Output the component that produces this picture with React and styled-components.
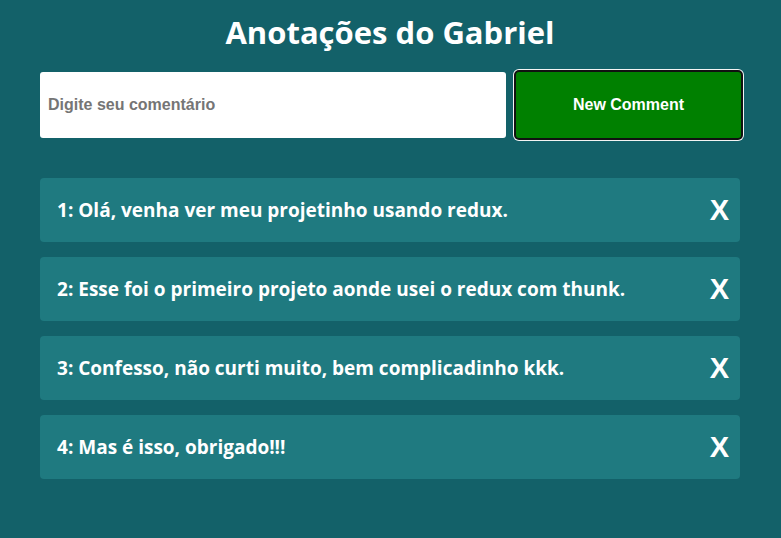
import styled, { createGlobalStyle } from 'styled-components';

const GlobalStyle = createGlobalStyle`
  html, body {
    margin: 0;
    padding: 0;
    background: #136169;
    min-height: 100%;
  }
  body {
    font-family: 'Open Sans', 'DejaVu Sans', sans-serif;
  }
`;

const COMMENTS = [
  'Olá, venha ver meu projetinho usando redux.',
  'Esse foi o primeiro projeto aonde usei o redux com thunk.',
  'Confesso, não curti muito, bem complicadinho kkk.',
  'Mas é isso, obrigado!!!',
];

const Page = styled.main`
  width: 781px;
  padding: 10px 41px 40px 40px;
  min-height: 538px;
  box-sizing: border-box;
`;

const Title = styled.h1`
  margin: 0;
  text-align: center;
  color: #fff;
  font-size: 31px;
  font-weight: 700;
  line-height: 44px;
`;

const Form = styled.form`
  display: flex;
  gap: 8px;
  margin-top: 16px;
  width: 703px;
  align-items: center;
`;

const Input = styled.input`
  width: 466px;
  height: 66px;
  box-sizing: border-box;
  border: none;
  border-radius: 3px;
  padding: 0 8px;
  font-family: 'Liberation Sans', Arial, sans-serif;
  font-weight: 700;
  font-size: 16px;
  color: #333;
  outline: none;

  &::placeholder {
    color: #757575;
  }
`;

const Button = styled.button`
  width: 229px;
  height: 70px;
  box-sizing: border-box;
  background: #008000;
  color: #fff;
  border: 2px solid #111;
  box-shadow: 0 0 0 1px #f4f4f4;
  border-radius: 5px;
  font-family: 'Liberation Sans', Arial, sans-serif;
  font-weight: 700;
  font-size: 16px;
  cursor: pointer;
`;

const List = styled.ul`
  list-style: none;
  margin: 38px 0 0;
  padding: 0;
  display: flex;
  flex-direction: column;
  gap: 15px;
`;

const Item = styled.li`
  display: flex;
  align-items: center;
  justify-content: space-between;
  height: 64px;
  padding: 0 11px 0 17px;
  background: #1f7a80;
  border-radius: 4px;
  color: #fff;
  font-size: 19px;
  font-weight: 700;
`;

const Remove = styled.button`
  background: none;
  border: none;
  color: #fff;
  font-family: 'Liberation Sans', Arial, sans-serif;
  font-size: 29px;
  font-weight: 700;
  padding: 0;
  cursor: pointer;
`;

export default function App() {
  return (
    <>
      <GlobalStyle />
      <Page>
        <Title>Anotações do Gabriel</Title>
        <Form onSubmit={(e) => e.preventDefault()}>
          <Input placeholder="Digite seu comentário" />
          <Button type="submit">New Comment</Button>
        </Form>
        <List>
          {COMMENTS.map((text, i) => (
            <Item key={i}>
              <span>
                {i + 1}: {text}
              </span>
              <Remove type="button">X</Remove>
            </Item>
          ))}
        </List>
      </Page>
    </>
  );
}
